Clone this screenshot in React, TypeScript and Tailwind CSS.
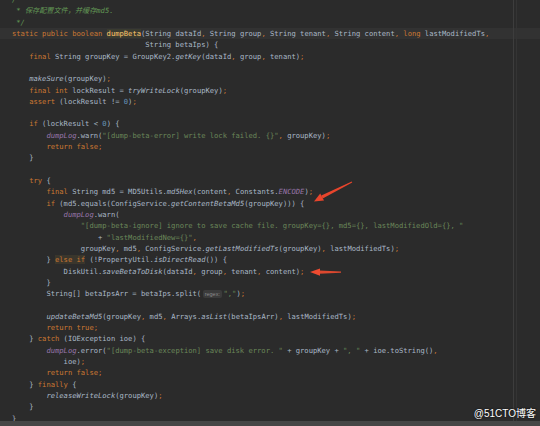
import React from "react"

// Darcula-ish token styles, keyed by the one-letter tags used in the source lines below
const TOKEN: Record<string, string> = {
  k: "text-[#cc7832]",
  s: "text-[#6a8759]",
  c: "text-[#629755] italic",
  f: "text-[#ffc66d] bg-[#3a3b30]",
  p: "text-[#9876aa] italic",
  i: "italic",
  n: "text-[#6897bb]",
  e: "text-[#cc7832] bg-[#3a362c]",
}

const LINES: string[] = [
  "⟦c|/**⟧",
  "⟦c| * 保存配置文件，并缓存md5.⟧",
  "⟦c| */⟧",
  "⟦k|static public boolean⟧ ⟦f|dumpBeta⟧(String dataId, String group, String tenant, String content, ⟦k|long⟧ lastModifiedTs,",
  "                               String betaIps) {",
  "    ⟦k|final⟧ String groupKey = GroupKey2.⟦i|getKey⟧(dataId, group, tenant);",
  "",
  "    ⟦i|makeSure⟧(groupKey);",
  "    ⟦k|final int⟧ lockResult = ⟦i|tryWriteLock⟧(groupKey);",
  "    ⟦k|assert⟧ (lockResult != ⟦n|0⟧);",
  "",
  "    ⟦k|if⟧ (lockResult < ⟦n|0⟧) {",
  "        ⟦p|dumpLog⟧.warn(⟦s|\"[dump-beta-error] write lock failed. {}\"⟧, groupKey);",
  "        ⟦k|return false⟧;",
  "    }",
  "",
  "    ⟦k|try⟧ {",
  "        ⟦k|final⟧ String md5 = MD5Utils.⟦i|md5Hex⟧(content, Constants.⟦p|ENCODE⟧);",
  "        ⟦k|if⟧ (md5.equals(ConfigService.⟦i|getContentBetaMd5⟧(groupKey))) {",
  "            ⟦p|dumpLog⟧.warn(",
  "                ⟦s|\"[dump-beta-ignore] ignore to save cache file. groupKey={}, md5={}, lastModifiedOld={}, \"⟧",
  "                    + ⟦s|\"lastModifiedNew={}\"⟧,",
  "                groupKey, md5, ConfigService.⟦i|getLastModifiedTs⟧(groupKey), lastModifiedTs);",
  "        } ⟦e|else if⟧ (!PropertyUtil.⟦i|isDirectRead⟧()) {",
  "            DiskUtil.⟦i|saveBetaToDisk⟧(dataId, group, tenant, content);",
  "        }",
  "        String[] betaIpsArr = betaIps.split(⟦h|regex:⟧⟦s|\",\"⟧);",
  "",
  "        ⟦i|updateBetaMd5⟧(groupKey, md5, Arrays.⟦i|asList⟧(betaIpsArr), lastModifiedTs);",
  "        ⟦k|return true⟧;",
  "    } ⟦k|catch⟧ (IOException ioe) {",
  "        ⟦p|dumpLog⟧.error(⟦s|\"[dump-beta-exception] save disk error. \"⟧ + groupKey + ⟦s|\", \"⟧ + ioe.toString(),",
  "            ioe);",
  "        ⟦k|return false⟧;",
  "    } ⟦k|finally⟧ {",
  "        ⟦i|releaseWriteLock⟧(groupKey);",
  "    }",
  "}",
]

function plain(text: string, base: string) {
  // commas and semicolons are orange in Darcula
  return text.split(/([,;])/).map((part, j) =>
    part === "," || part === ";" ? (
      <span key={`${base}-${j}`} className="text-[#cc7832]">
        {part}
      </span>
    ) : (
      <React.Fragment key={`${base}-${j}`}>{part}</React.Fragment>
    ),
  )
}

function CodeLine({ src }: { src: string }) {
  const out: React.ReactNode[] = []
  const re = /⟦(\w)\|([^⟧]*)⟧/g
  let last = 0
  let m: RegExpExecArray | null
  let n = 0
  while ((m = re.exec(src))) {
    if (m.index > last) out.push(...plain(src.slice(last, m.index), `p${n++}`))
    const [, tag, body] = m
    if (tag === "h") {
      out.push(
        <span
          key={`t${n++}`}
          className="mx-[1.5px] inline-block rounded-[2px] bg-[#3b3b3b] px-[2px] align-middle font-['Liberation_Sans',sans-serif] text-[5.5px] leading-[8px] text-[#8c8c8c] not-italic"
        >
          {body}
        </span>,
      )
    } else {
      out.push(
        <span key={`t${n++}`} className={TOKEN[tag]}>
          {body}
        </span>,
      )
    }
    last = m.index + m[0].length
  }
  if (last < src.length) out.push(...plain(src.slice(last), `p${n++}`))
  return <>{out}</>
}

function Arrows() {
  return (
    <svg className="pointer-events-none absolute inset-0" width={540} height={426} viewBox="0 0 540 426">
      {/* diagonal arrow pointing at the if-line */}
      <polygon points="352.2,182.4 351.8,181.4 321.3,195.6 322.7,198.4" fill="#e8452c" />
      <polygon points="314,201.5 320.2,193.6 324,200.6" fill="#e8452c" />
      {/* horizontal arrow pointing at saveBetaToDisk */}
      <polygon points="341,271.5 341,272.7 319,273.8 319,270.4" fill="#ef4b30" opacity="0.9" />
      <polygon points="310,272.1 320,268.4 320,275.8" fill="#ef4b30" />
    </svg>
  )
}

export default function App() {
  return (
    <div className="flex h-[426px] w-[540px] flex-col overflow-hidden bg-[#2b2b2b]">
      <div className="relative flex-1 overflow-hidden">
        <div className="-mt-[6px] whitespace-pre font-['DejaVu_Sans_Mono','Noto_Sans_CJK_SC',monospace] text-[7.15px] leading-[11.32px] text-[#a9b7c6]">
          {LINES.map((src, idx) => (
            <div key={idx} className={`h-[11.32px] pl-[12px] ${idx === 3 ? "bg-[#323232]" : ""}`}>
              <CodeLine src={src} />
            </div>
          ))}
        </div>

        {/* right margin guides */}
        <div className="absolute top-0 bottom-0 left-[513px] w-px bg-[#3d3d3d]" />
        <div className="absolute top-0 bottom-0 left-[516px] w-px bg-[#343434]" />

        <Arrows />

        <div className="absolute right-[4px] bottom-[1px] font-['Liberation_Sans','Noto_Sans_CJK_SC',sans-serif] text-[10px] leading-[12px] text-white [text-shadow:0_0_2px_#000]">
          @51CTO博客
        </div>
      </div>
      <div className="h-[5px] bg-[#464646]" />
    </div>
  )
}
